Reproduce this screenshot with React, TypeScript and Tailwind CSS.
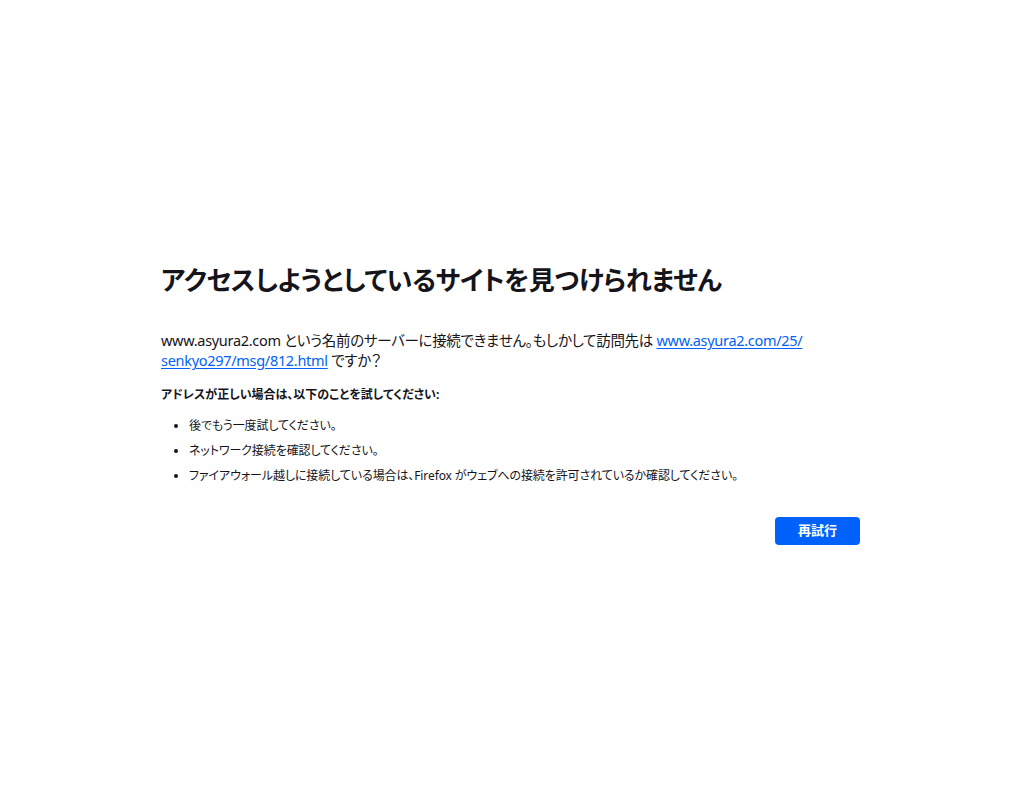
import React from "react";

const font =
  "font-['Noto_Sans','Noto_Sans_CJK_JP',sans-serif] [font-feature-settings:'palt']";

export default function App() {
  return (
    <div className={`min-h-screen bg-white text-[#15141a] ${font}`}>
      <div className="ml-[161px] w-[699px] pt-[264px]">
        <h1 className="text-[26px] leading-[32px] font-semibold tracking-[-0.4px]">
          アクセスしようとしているサイトを見つけられません
        </h1>

        <p className="mt-[34px] text-[14.5px] leading-[20px] tracking-[-0.3px]">
          <span className="whitespace-nowrap">
            www.asyura2.com という名前のサーバーに接続できません。もしかして訪問先は{" "}
            <a href="#" className="text-[#0062fa] underline underline-offset-2">
              www.asyura2.com/25/
            </a>
          </span>
          <br />
          <a href="#" className="text-[#0062fa] underline underline-offset-2">
            senkyo297/msg/812.html
          </a>{" "}
          ですか？
        </p>

        <p className="mt-[16px] text-[12px] leading-[18px] font-bold">
          アドレスが正しい場合は、以下のことを試してください:
        </p>

        <ul className="mt-[9px] list-disc pl-[28px] text-[12px] leading-[25px] tracking-[-0.1px]">
          <li>後でもう一度試してください。</li>
          <li>ネットワーク接続を確認してください。</li>
          <li>
            ファイアウォール越しに接続している場合は、Firefox
            がウェブへの接続を許可されているか確認してください。
          </li>
        </ul>

        <div className="mt-[29px] flex justify-end">
          <button className="h-[28px] w-[85px] rounded-[4px] bg-[#0062fa] text-[13px] font-bold text-white">
            再試行
          </button>
        </div>
      </div>
    </div>
  );
}
